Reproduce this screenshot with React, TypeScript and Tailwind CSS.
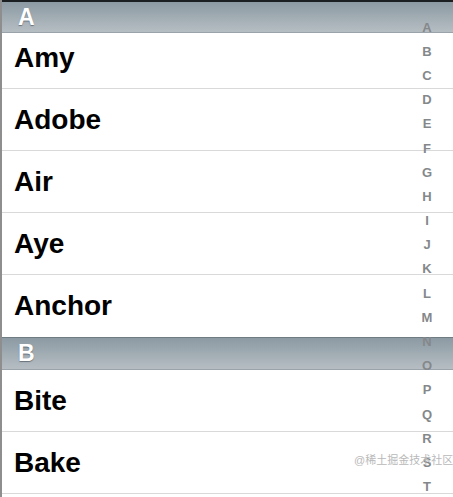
const sections = [
  { letter: "A", items: ["Amy", "Adobe", "Air", "Aye", "Anchor"] },
  { letter: "B", items: ["Bite", "Bake"] },
]

const index = "ABCDEFGHIJKLMNOPQRST".split("")

function SectionHeader({ letter, first }: { letter: string; first?: boolean }) {
  return (
    <div
      className={
        "flex items-center h-[33px] pl-[16px] bg-gradient-to-b from-[#8c9aa3] to-[#b6bec3] border-b border-b-[#9aa3a9] " +
        (first ? "border-t-2 border-t-[#1c1f21]" : "border-t border-t-[#6f7c84]")
      }
    >
      <span className="text-[23px] font-bold text-white leading-none [text-shadow:0_1px_1px_rgba(60,70,80,0.6)]">
        {letter}
      </span>
    </div>
  )
}

export default function App() {
  return (
    <div
      className="relative w-[453px] h-[497px] overflow-hidden bg-white border-l-2 border-l-[#8e8e8e]"
      style={{ fontFamily: '"Liberation Sans", Arial, sans-serif' }}
    >
      {sections.map((section, si) => (
        <div key={section.letter}>
          <SectionHeader letter={section.letter} first={si === 0} />
          {section.items.map((name, i) => (
            <div
              key={name}
              className={
                "flex items-center pl-[12px] border-b border-b-[#d9d9d9] " +
                (si === 0 && i === 0 ? "h-[56px] pb-[5px]" : "h-[62px]") +
                (i === section.items.length - 1 && si === 0 ? " border-b-0" : "")
              }
            >
              <span className="text-[28px] font-bold text-black leading-none">{name}</span>
            </div>
          ))}
        </div>
      ))}

      {/* section index on the right edge */}
      <div className="absolute top-[15px] right-[15px] w-[22px] flex flex-col items-center">
        {index.map((l) => (
          <div key={l} className="h-[24.2px] flex items-center text-[13px] font-bold text-[#85888b] leading-none">
            {l}
          </div>
        ))}
      </div>

      {/* watermark */}
      <div
        className="absolute left-[352px] top-[455px] whitespace-nowrap text-[11px] text-[#b9b9b9] leading-none"
        style={{ fontFamily: '"Liberation Sans", "Noto Sans CJK SC", sans-serif' }}
      >
        @稀土掘金技术社区
      </div>
    </div>
  )
}
